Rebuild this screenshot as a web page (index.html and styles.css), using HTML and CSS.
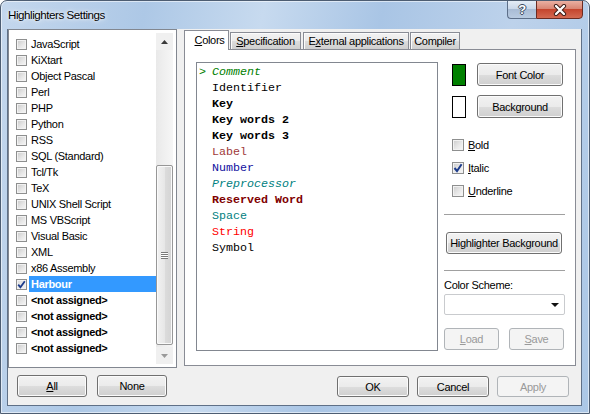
FILE: index.html
```html
<!DOCTYPE html>
<html>
<head>
<meta charset="utf-8">
<title>Highlighters Settings</title>
<link rel="stylesheet" href="styles.css">
</head>
<body>
<div class="window">
  <div class="titlebar">
    <span class="title">Highlighters Settings</span>
    <div class="caption">
      <div class="cap-btn help"><span class="q">?</span></div>
      <div class="cap-btn close">
        <svg width="14" height="12" viewBox="0 0 14 12">
          <path d="M3 2 L11 10 M11 2 L3 10" stroke="#3a1a14" stroke-width="4.2" stroke-linecap="round"/>
          <path d="M3 2 L11 10 M11 2 L3 10" stroke="#ffffff" stroke-width="2.4" stroke-linecap="round"/>
        </svg>
      </div>
    </div>
  </div>
  <div class="client">
    <div class="left">
      <div class="listbox">
        <div class="items">
          <div class="item"><span class="cb"></span><span class="lbl">JavaScript</span></div>
          <div class="item"><span class="cb"></span><span class="lbl">KiXtart</span></div>
          <div class="item"><span class="cb"></span><span class="lbl">Object Pascal</span></div>
          <div class="item"><span class="cb"></span><span class="lbl">Perl</span></div>
          <div class="item"><span class="cb"></span><span class="lbl">PHP</span></div>
          <div class="item"><span class="cb"></span><span class="lbl">Python</span></div>
          <div class="item"><span class="cb"></span><span class="lbl">RSS</span></div>
          <div class="item"><span class="cb"></span><span class="lbl">SQL (Standard)</span></div>
          <div class="item"><span class="cb"></span><span class="lbl">Tcl/Tk</span></div>
          <div class="item"><span class="cb"></span><span class="lbl">TeX</span></div>
          <div class="item"><span class="cb"></span><span class="lbl">UNIX Shell Script</span></div>
          <div class="item"><span class="cb"></span><span class="lbl">MS VBScript</span></div>
          <div class="item"><span class="cb"></span><span class="lbl">Visual Basic</span></div>
          <div class="item"><span class="cb"></span><span class="lbl">XML</span></div>
          <div class="item"><span class="cb"></span><span class="lbl">x86 Assembly</span></div>
          <div class="item"><span class="cb checked"><svg width="9" height="9" viewBox="0 0 9 9"><path d="M1.2 4.6 L3.4 7.2 L7.8 1.2" fill="none" stroke="#1d3c8c" stroke-width="1.8"/></svg></span><span class="lbl sel">Harbour</span></div>
          <div class="item"><span class="cb"></span><span class="lbl na">&lt;not assigned&gt;</span></div>
          <div class="item"><span class="cb"></span><span class="lbl na">&lt;not assigned&gt;</span></div>
          <div class="item"><span class="cb"></span><span class="lbl na">&lt;not assigned&gt;</span></div>
          <div class="item"><span class="cb"></span><span class="lbl na">&lt;not assigned&gt;</span></div>
        </div>
        <div class="vscroll">
          <div class="sb-arrow"><svg width="7" height="4" viewBox="0 0 7 4"><path d="M0 4 L3.5 0 L7 4 Z" fill="#3a3a3a"/></svg></div>
          <div class="sb-thumb"><span class="grip"></span></div>
          <div class="sb-arrow down"><svg width="7" height="4" viewBox="0 0 7 4"><path d="M0 0 L3.5 4 L7 0 Z" fill="#9a9a9a"/></svg></div>
        </div>
      </div>
      <div class="left-buttons">
        <div class="btn w70"><span class="u">A</span>ll</div>
        <div class="btn w70">None</div>
      </div>
    </div>

    <div class="right">
      <div class="tabs">
        <div class="tab active"><span class="u">C</span>olors</div>
        <div class="tab t-spec"><span class="u">S</span>pecification</div>
        <div class="tab t-ext">E<span class="u">x</span>ternal applications</div>
        <div class="tab t-comp">Compiler</div>
      </div>
      <div class="panel">
        <div class="codelist">
          <div class="row c-comment"><span class="mk">&gt;</span><i>Comment</i></div>
          <div class="row c-ident"><span class="mk"></span>Identifier</div>
          <div class="row c-key"><span class="mk"></span>Key</div>
          <div class="row c-key"><span class="mk"></span>Key words 2</div>
          <div class="row c-key"><span class="mk"></span>Key words 3</div>
          <div class="row c-label"><span class="mk"></span>Label</div>
          <div class="row c-number"><span class="mk"></span>Number</div>
          <div class="row c-pre"><span class="mk"></span><i>Preprocessor</i></div>
          <div class="row c-res"><span class="mk"></span>Reserved Word</div>
          <div class="row c-space"><span class="mk"></span>Space</div>
          <div class="row c-string"><span class="mk"></span>String</div>
          <div class="row c-symbol"><span class="mk"></span>Symbol</div>
        </div>
        <div class="props">
          <div class="swrow first"><span class="swatch green"></span><div class="btn sw-btn">Font Color</div></div>
          <div class="swrow second"><span class="swatch white"></span><div class="btn sw-btn">Background</div></div>
          <div class="chk first-chk"><span class="cb2"></span><span class="clbl"><span class="u">B</span>old</span></div>
          <div class="chk"><span class="cb2"><svg width="10" height="10" viewBox="0 0 10 10"><path d="M1.5 5 L4 8 L8.6 1.2" fill="none" stroke="#1d3c8c" stroke-width="2"/></svg></span><span class="clbl"><span class="u">I</span>talic</span></div>
          <div class="chk"><span class="cb2"></span><span class="clbl"><span class="u">U</span>nderline</span></div>
          <div class="sep sep1"></div>
          <div class="btn hb-btn">Highlighter Background</div>
          <div class="sep sep2"></div>
          <div class="cs-label">Color Scheme:</div>
          <div class="combo"><svg width="8" height="4" viewBox="0 0 8 4"><path d="M0 0 L4 4 L8 0 Z" fill="#111"/></svg></div>
          <div class="ls-row">
            <div class="btn disabled w55"><span class="u">L</span>oad</div>
            <div class="btn disabled w55"><span class="u">S</span>ave</div>
          </div>
        </div>
      </div>
      <div class="dlg-buttons">
        <div class="btn w72">OK</div>
        <div class="btn w72">Cancel</div>
        <div class="btn w72 disabled">Apply</div>
      </div>
    </div>
  </div>
</div>
</body>
</html>
```

FILE: styles.css
```css
html, body {
  margin: 0;
  padding: 0;
  background: #ffffff;
}

body {
  font-family: "Liberation Sans", Arial, sans-serif;
  font-size: 11px;
  letter-spacing: -0.3px;
  color: #000;
}

.window {
  width: 590px;
  height: 414px;
  box-sizing: border-box;
  border: 1px solid #4d5d72;
  border-radius: 7px 7px 0 0;
  background: linear-gradient(100deg, #c4d7ed 0%, #adc8e6 22%, #c7daef 40%, #a9c5e5 58%, #bdd2eb 78%, #abc7e6 100%);
  box-shadow: inset 0 0 0 1px rgba(255, 255, 255, 0.55);
  display: flex;
  flex-direction: column;
  overflow: hidden;
}

.titlebar {
  height: 28px;
  display: flex;
  justify-content: space-between;
  padding-left: 7px;
}

.title {
  line-height: 28px;
  font-size: 11.6px;
  letter-spacing: -0.45px;
  color: #000;
  text-shadow: 0 0 6px rgba(255, 255, 255, 0.9), 0 0 3px rgba(255, 255, 255, 0.9);
}

.caption {
  display: flex;
  align-self: flex-start;
  margin-right: 6px;
  margin-top: -1px;
}

.cap-btn {
  height: 19px;
  box-sizing: border-box;
  display: flex;
  align-items: center;
  justify-content: center;
}

.help {
  width: 29px;
  border: 1px solid #5d6f89;
  border-right: none;
  border-radius: 0 0 0 4px;
  background: linear-gradient(#e4ecf6 0%, #cad8ea 45%, #a9bcd5 50%, #b9cbe1 100%);
}

.help .q {
  font-family: "Liberation Sans", Arial, sans-serif;
  font-weight: bold;
  font-size: 13px;
  color: #ffffff;
  text-shadow: -1px 0 #3a4a60, 1px 0 #3a4a60, 0 -1px #3a4a60, 0 1px #3a4a60;
  line-height: 16px;
}

.close {
  width: 47px;
  border: 1px solid #6b2b22;
  border-radius: 0 0 4px 0;
  background: linear-gradient(#eab0a2 0%, #d98674 45%, #c5452e 50%, #d46a52 100%);
}

.client {
  width: 575px;
  height: 377px;
  box-sizing: border-box;
  margin-left: 6px;
  border: 1px solid #5f7087;
  border-top: none;
  background: #f0f0f0;
  display: flex;
}

/* ---------- left list ---------- */
.left {
  width: 169px;
  display: flex;
  flex-direction: column;
}

.listbox {
  height: 339px;
  box-sizing: border-box;
  border: 1px solid #828790;
  background: #ffffff;
  display: flex;
}

.items {
  flex: 1;
  padding-top: 6px;
}

.item {
  height: 16px;
  display: flex;
  align-items: center;
}

.cb {
  width: 11px;
  height: 11px;
  box-sizing: border-box;
  margin-left: 7px;
  margin-right: 2px;
  border: 1px solid #8e8f8f;
  background: linear-gradient(135deg, #c9c9c9 0%, #e6e6e6 55%, #f7f7f7 100%);
  box-shadow: inset 0 0 0 1px #f2f2f2;
  display: flex;
  align-items: center;
  justify-content: center;
}

.cb.checked {
  background: linear-gradient(135deg, #dcdcdc 0%, #f4f4f4 100%);
}

.lbl {
  flex: 1;
  height: 16px;
  line-height: 16px;
  padding-left: 2px;
  white-space: nowrap;
}

.lbl.sel {
  background: #3399ff;
  color: #ffffff;
  font-weight: bold;
}

.lbl.na {
  font-weight: bold;
}

.vscroll {
  width: 17px;
  margin: 3px 3px 3px 0;
  background: linear-gradient(to right, #e9e9e9, #f6f6f6);
  display: flex;
  flex-direction: column;
}

.sb-arrow {
  height: 17px;
  display: flex;
  align-items: center;
  justify-content: center;
  background: #f0f0f0;
}

.sb-arrow.down {
  margin-top: auto;
}

.sb-thumb {
  margin-top: 115px;
  height: 180px;
  box-sizing: border-box;
  border: 1px solid #979797;
  border-radius: 2px;
  background: linear-gradient(to right, #f2f2f2 0%, #e7e7e7 50%, #dcdcdc 51%, #d4d4d4 100%);
  box-shadow: inset 0 0 0 1px #fafafa;
  display: flex;
  align-items: center;
  justify-content: center;
}

.grip {
  width: 7px;
  height: 7px;
  background: repeating-linear-gradient(#7a7a7a 0 1px, #ffffff 1px 2px);
}

.left-buttons {
  margin-top: 7px;
  padding-left: 9px;
  display: flex;
  gap: 10px;
}

/* ---------- buttons ---------- */
.btn {
  height: 22px;
  box-sizing: border-box;
  border: 1px solid #707070;
  border-radius: 3px;
  background: linear-gradient(#f2f2f2 0%, #ebebeb 50%, #dddddd 51%, #cfcfcf 100%);
  box-shadow: inset 0 0 0 1px #fbfbfb;
  display: flex;
  align-items: center;
  justify-content: center;
  white-space: nowrap;
}

.btn.disabled {
  border-color: #b0b4b8;
  background: #f4f4f4;
  box-shadow: none;
  color: #9a9a9a;
}

.w70 { width: 70px; }
.w72 { width: 72px; height: 21px; }
.w55 { width: 55px; }

.u {
  text-decoration: underline;
}

/* ---------- right ---------- */
.right {
  margin-left: 7px;
  width: 392px;
  display: flex;
  flex-direction: column;
}

.tabs {
  height: 20px;
  display: flex;
  align-items: flex-end;
}

.tab {
  height: 17px;
  box-sizing: border-box;
  border: 1px solid #898c95;
  border-bottom: none;
  background: linear-gradient(#f2f2f2 0%, #ebebeb 50%, #dddddd 51%, #cfcfcf 100%);
  box-shadow: inset 1px 1px 0 #fbfbfb;
  display: flex;
  align-items: center;
  justify-content: center;
  white-space: nowrap;
}

.tab.active {
  width: 45px;
  height: 20px;
  margin-bottom: -1px;
  position: relative;
  z-index: 1;
  background: #ffffff;
  box-shadow: none;
  padding-left: 6px;
  padding-bottom: 1px;
}

.t-spec { width: 71px; margin-left: 1px; }
.t-ext { width: 106px; margin-left: 2px; }
.t-comp { width: 50px; margin-left: 1px; }

.panel {
  height: 317px;
  box-sizing: border-box;
  border: 1px solid #898c95;
  background: #ffffff;
  padding: 12px 0 0 11px;
  display: flex;
  align-items: flex-start;
}

.codelist {
  width: 242px;
  height: 289px;
  box-sizing: border-box;
  border: 1px solid #828790;
  padding-top: 1px;
  font-family: "Liberation Mono", "Courier New", monospace;
  font-size: 11.67px;
  letter-spacing: 0;
}

.row {
  height: 16px;
  line-height: 16px;
  padding-left: 2px;
  white-space: pre;
}

.mk {
  display: inline-block;
  width: 13px;
  color: #008000;
}

.row i { font-style: italic; }

.c-comment { color: #008000; }
.c-ident { color: #000000; }
.c-key { color: #000000; font-weight: bold; }
.c-label { color: #a03a3a; }
.c-number { color: #1010a0; }
.c-pre { color: #008080; }
.c-res { color: #800000; font-weight: bold; }
.c-space { color: #008080; }
.c-string { color: #ff0000; }
.c-symbol { color: #000000; }

.props {
  margin-left: 6px;
  width: 121px;
  display: flex;
  flex-direction: column;
}

.swrow {
  height: 23px;
  display: flex;
  align-items: center;
}

.swrow.first { margin-top: 1px; }
.swrow.second { margin-top: 9px; }

.swatch {
  width: 14px;
  height: 22px;
  box-sizing: border-box;
  border: 1px solid #000000;
  margin-left: 8px;
}

.swatch.green { background: #008000; }
.swatch.white { background: #ffffff; }

.sw-btn {
  width: 86px;
  height: 23px;
  margin-left: 11px;
}

.chk {
  height: 23px;
  display: flex;
  align-items: center;
  padding-left: 8px;
}

.chk.first-chk { margin-top: 15px; }

.cb2 {
  width: 12px;
  height: 12px;
  box-sizing: border-box;
  border: 1px solid #8e8f8f;
  background: linear-gradient(135deg, #cbcbcb 0%, #e8e8e8 55%, #f8f8f8 100%);
  box-shadow: inset 0 0 0 1px #f2f2f2;
  display: flex;
  align-items: center;
  justify-content: center;
}

.clbl {
  margin-left: 4px;
}

.sep {
  height: 0;
  border-top: 1px solid #a0a0a0;
  border-bottom: 1px solid #ffffff;
}

.sep1 { margin-top: 12px; }
.sep2 { margin-top: 16px; }

.hb-btn {
  margin-top: 16px;
  margin-left: 2px;
  width: 116px;
}

.cs-label {
  margin-top: 6px;
  line-height: 14px;
}

.combo {
  margin-top: 2px;
  height: 21px;
  box-sizing: border-box;
  border: 1px solid #c9cbce;
  border-radius: 2px;
  background: #ffffff;
  display: flex;
  align-items: center;
  justify-content: flex-end;
  padding-right: 5px;
}

.ls-row {
  margin-top: 13px;
  display: flex;
  gap: 10px;
}

.dlg-buttons {
  margin-top: 10px;
  padding-right: 7px;
  display: flex;
  justify-content: flex-end;
  gap: 8px;
}
```
